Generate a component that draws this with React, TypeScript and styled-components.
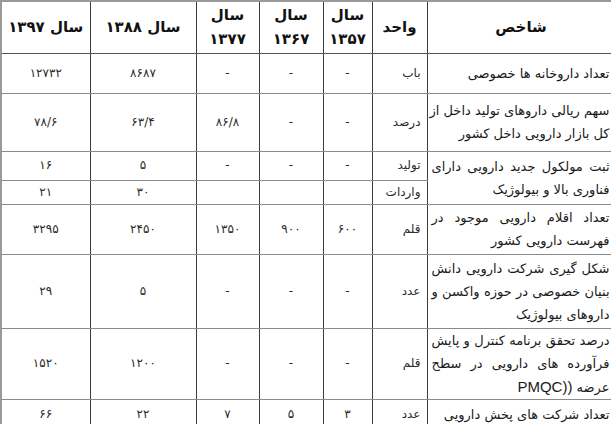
import React from "react";
import styled, { createGlobalStyle } from "styled-components";

const Global = createGlobalStyle`
  html, body { margin: 0; padding: 0; background: #ffffff; overflow: hidden; }
  body { font-family: "DejaVu Sans", "Noto Sans", sans-serif; color: #111; }
  *, *::before, *::after { box-sizing: border-box; }
`;

const Page = styled.div`
  width: 611px;
  height: 424px;
  overflow: hidden;
  background: #fff;
`;

const Table = styled.table`
  direction: rtl;
  border-collapse: collapse;
  table-layout: fixed;
  width: 614px;
  border-top: 2px solid #9a9a9a;
  border-left: 2px solid #9a9a9a;
`;

const Col = styled.col<{ $w: number }>`
  width: ${(p) => p.$w}px;
`;

const Row = styled.tr<{ $h: number }>`
  height: ${(p) => p.$h}px;
`;

const HeadCell = styled.th`
  padding: 0 2px;
  font-size: 15px;
  font-weight: bold;
  line-height: 24px;
  text-align: center;
  vertical-align: middle;
  color: #111;
  border-left: 1px solid #3c3c3c;
  border-right: 1px solid #3c3c3c;
  border-bottom: 1px solid #555;
`;

const Cell = styled.td<{ $align?: "center" | "right" }>`
  padding: 0 6px;
  font-size: 12px;
  line-height: 23px;
  text-align: ${(p) => p.$align ?? "center"};
  vertical-align: middle;
  color: #2a2a2a;
  border-left: 1px solid #3c3c3c;
  border-right: 1px solid #3c3c3c;
  border-top: 1px solid #8a8a8a;
  border-bottom: 1px solid #8a8a8a;
`;

const TextCell = styled.td`
  padding: 0 5px 0 4px;
  font-size: 13px;
  line-height: 23px;
  vertical-align: middle;
  color: #1a1a1a;
  border-right: 1px solid #3c3c3c;
  border-top: 1px solid #8a8a8a;
  border-bottom: 1px solid #8a8a8a;
`;

const Line = styled.div<{ $full?: boolean }>`
  white-space: nowrap;
  text-align: ${(p) => (p.$full ? "justify" : "right")};
  text-align-last: ${(p) => (p.$full ? "justify" : "right")};
`;

const Latin = styled.span`
  font-family: "Liberation Sans", Arial, sans-serif;
  font-size: 15px;
`;

type Data = {
  h: number;
  lines: React.ReactNode[];
  span?: number;
  unit: string;
  vals: string[]; // 1357,1367,1377,1388,1397
};

const ARZE = "\u0639\u0631\u0636\u0647";

const rows: Data[] = [
  { h: 40, lines: ["تعداد داروخانه ها خصوصی"], unit: "باب", vals: ["-", "-", "-", "۸۶۸۷", "۱۲۷۳۲"] },
  {
    h: 58,
    lines: ["سهم ریالی داروهای تولید داخل از", "کل بازار دارویی داخل کشور"],
    unit: "درصد",
    vals: ["-", "-", "۸۶/۸", "۶۳/۴", "۷۸/۶"],
  },
  {
    h: 29,
    lines: ["ثبت مولکول جدید دارویی دارای", "فناوری بالا و بیولوژیک"],
    span: 2,
    unit: "تولید",
    vals: ["-", "-", "-", "۵", "۱۶"],
  },
  { h: 24, lines: [], unit: "واردات", vals: ["", "", "", "۳۰", "۲۱"] },
  {
    h: 50,
    lines: ["تعداد اقلام دارویی موجود در", "فهرست دارویی کشور"],
    unit: "قلم",
    vals: ["۶۰۰", "۹۰۰", "۱۳۵۰", "۲۴۵۰", "۳۲۹۵"],
  },
  {
    h: 74,
    lines: ["شکل گیری شرکت دارویی دانش", "بنیان خصوصی در حوزه واکسن و", "داروهای بیولوژیک"],
    unit: "عدد",
    vals: ["-", "-", "-", "۵", "۲۹"],
  },
  {
    h: 70,
    lines: [
      "درصد تحقق برنامه کنترل و پایش",
      "فرآورده های دارویی در سطح",
      <React.Fragment key="l">
        {ARZE + " "}
        <Latin>((PMQC</Latin>
      </React.Fragment>,
    ],
    unit: "قلم",
    vals: ["-", "-", "-", "۱۲۰۰", "۱۵۲۰"],
  },
  { h: 30, lines: ["تعداد شرکت های پخش دارویی"], unit: "عدد", vals: ["۳", "۵", "۷", "۲۲", "۶۶"] },
];

export default function App() {
  return (
    <Page>
      <Global />
      <Table>
        <colgroup>
          <Col $w={188} />
          <Col $w={55} />
          <Col $w={49} />
          <Col $w={64} />
          <Col $w={63} />
          <Col $w={106} />
          <Col $w={89} />
        </colgroup>
        <thead>
          <Row $h={52}>
            <HeadCell>شاخص</HeadCell>
            <HeadCell>واحد</HeadCell>
            <HeadCell>
              سال
              <br />
              ۱۳۵۷
            </HeadCell>
            <HeadCell>
              سال
              <br />
              ۱۳۶۷
            </HeadCell>
            <HeadCell>
              سال
              <br />
              ۱۳۷۷
            </HeadCell>
            <HeadCell>سال ۱۳۸۸</HeadCell>
            <HeadCell>سال ۱۳۹۷</HeadCell>
          </Row>
        </thead>
        <tbody>
          {rows.map((r, i) => (
            <Row $h={r.h} key={i}>
              {r.lines.length > 0 && (
                <TextCell rowSpan={r.span ?? 1}>
                  {r.lines.map((l, j) => (
                    <Line key={j} $full={r.lines.length > 1 && j < r.lines.length - 1}>
                      {l}
                    </Line>
                  ))}
                </TextCell>
              )}
              <Cell $align="right">{r.unit}</Cell>
              {r.vals.map((v, j) => (
                <Cell key={j}>{v}</Cell>
              ))}
            </Row>
          ))}
        </tbody>
      </Table>
    </Page>
  );
}
